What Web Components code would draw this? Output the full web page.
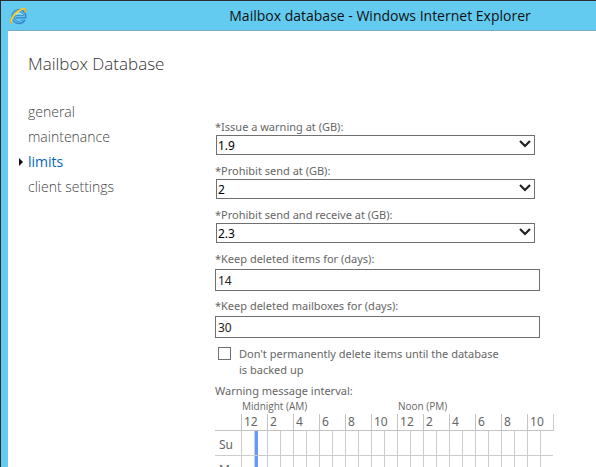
<!DOCTYPE html>
<html lang="en">
<head>
<meta charset="utf-8">
<title>Mailbox database</title>
<style>
    html, body {
        margin: 0;
        height: 100%;
        overflow: hidden;
    }

    body {
        font-family: "Noto Sans", "Open Sans", sans-serif;
        font-size: 11px;
        line-height: 16px;
        color: #666;
    }
</style>
</head>
<body>
<app-window caption="Mailbox database - Windows Internet Explorer">
    <mailbox-page heading="Mailbox Database">
        <side-nav slot="nav">
            <nav-item>general</nav-item>
            <nav-item>maintenance</nav-item>
            <nav-item current>limits</nav-item>
            <nav-item>client settings</nav-item>
        </side-nav>
        <limit-select label="*Issue a warning at (GB):" value="1.9"></limit-select>
        <limit-select label="*Prohibit send at (GB):" value="2"></limit-select>
        <limit-select label="*Prohibit send and receive at (GB):" value="2.3"></limit-select>
        <limit-input label="*Keep deleted items for (days):" value="14"></limit-input>
        <limit-input label="*Keep deleted mailboxes for (days):" value="30"></limit-input>
        <limit-check label="Don't permanently delete items until the database is backed up"></limit-check>
        <interval-grid label="Warning message interval:" days="Su,Mo"></interval-grid>
    </mailbox-page>
</app-window>

<script>
class BaseElement extends HTMLElement {
    constructor() {
        super();
        this.attachShadow({ mode: 'open' });
    }

    connectedCallback() {
        this.shadowRoot.innerHTML = this._getHTMLTemplate();
    }

    _attr(name) {
        return this.getAttribute(name) || '';
    }
}

class AppWindow extends BaseElement {
    _getHTMLTemplate() {
        return `
            <style>
                :host {
                    display: flex;
                    flex-direction: column;
                    box-sizing: border-box;
                    height: 100vh;
                    overflow: hidden;
                    padding-left: 7px;
                    border: solid #2d2d30;
                    border-width: 1px 0 0 1px;
                    background: #63cbf0;
                }

                header {
                    display: grid;
                    grid-template-columns: 164px 1fr 8px;
                    align-items: center;
                    height: 29px;
                    border-bottom: 1px solid #7aa9c4;
                }

                svg {
                    width: 18px;
                    height: 18px;
                    margin-left: 1px;
                }

                h1 {
                    margin: 0;
                    font-family: "Open Sans", sans-serif;
                    font-size: 14px;
                    line-height: 20px;
                    font-weight: 400;
                    text-align: center;
                    color: #111;
                }

                main {
                    flex: 1;
                    min-height: 0;
                    overflow: hidden;
                    background: #fff;
                }
            </style>
            <header>
                <svg viewBox="0 0 18 18" fill="none" aria-hidden="true">
                    <path d="M15.2 12.4A6 6 0 1 1 15.9 9.8H6.6" stroke="#2f86c8" stroke-width="3.2"/>
                    <path d="M14.8 12A5.8 5.8 0 1 1 15.4 9.6H6.8" stroke="#6cbcec" stroke-width="1.2"/>
                    <path d="M7 7.8C7.6 5.6 12 5.4 12.8 7.8" stroke="#d5f1fc" stroke-width="1"/>
                    <path d="M3.2 16.4C0.4 15.6 2.4 10.6 6.2 6.6C10.2 2.6 15.4 0.4 16.4 2.2C17 3.2 16.4 4.6 15.8 5.6" stroke="#eab020" stroke-width="1.8"/>
                    <path d="M2.2 14.6C2.6 11.6 5.6 7.4 9 4.8C12 2.4 15 1.4 15.8 2.2" stroke="#ffd83c" stroke-width="1.2"/>
                </svg>
                <h1>${this._attr('caption')}</h1>
            </header>
            <main><slot></slot></main>
        `;
    }
}

class MailboxPage extends BaseElement {
    _getHTMLTemplate() {
        return `
            <style>
                :host {
                    display: block;
                    padding: 20px 20px 0 11px;
                }

                h2 {
                    margin: 0 0 22px 9px;
                    font-family: "Open Sans", sans-serif;
                    font-size: 17px;
                    line-height: 26px;
                    font-weight: 300;
                    color: #333;
                }

                .columns {
                    display: grid;
                    grid-template-columns: 196px minmax(0, 1fr);
                }

                .form {
                    max-width: 340px;
                    padding-top: 20px;
                }
            </style>
            <h2>${this._attr('heading')}</h2>
            <div class="columns">
                <slot name="nav"></slot>
                <div class="form"><slot></slot></div>
            </div>
        `;
    }
}

class SideNav extends BaseElement {
    _getHTMLTemplate() {
        return `
            <style>
                :host {
                    display: block;
                    font-family: "Open Sans", sans-serif;
                }

                nav {
                    display: flex;
                    flex-direction: column;
                }
            </style>
            <nav><slot></slot></nav>
        `;
    }
}

class NavItem extends BaseElement {
    _getHTMLTemplate() {
        return `
            <style>
                :host {
                    display: block;
                }

                a {
                    display: flex;
                    align-items: center;
                    gap: 5px;
                    font-size: 14px;
                    line-height: 25px;
                    font-weight: 300;
                    color: #444;
                    text-decoration: none;
                }

                a::before {
                    content: "";
                    border: 4px solid transparent;
                    border-right-width: 0;
                }

                :host([current]) a {
                    font-weight: 400;
                    color: #0067b8;
                }

                :host([current]) a::before {
                    border-left-color: #111;
                }
            </style>
            <a href="#"><slot></slot></a>
        `;
    }
}

class LimitSelect extends BaseElement {
    _getHTMLTemplate() {
        return `
            <style>
                :host {
                    display: block;
                    max-width: 325px;
                    margin-bottom: 8px;
                }

                label {
                    display: block;
                }

                .box {
                    display: grid;
                    grid-template-columns: 1fr 24px;
                    align-items: center;
                    margin: 0 5px 0 1px;
                }

                select {
                    grid-area: 1 / 1 / 2 / 3;
                    appearance: none;
                    height: 20px;
                    padding: 1px 1px 0;
                    border: 1px solid #707070;
                    border-radius: 0;
                    background: #fff;
                    font: inherit;
                    font-size: 12px;
                    color: #000;
                }

                svg {
                    grid-area: 1 / 2;
                    width: 12px;
                    height: 8px;
                    margin: 0 0 2px 8px;
                    pointer-events: none;
                }
            </style>
            <label for="field">${this._attr('label')}</label>
            <div class="box">
                <select id="field">
                    <option>${this._attr('value')}</option>
                    <option>unlimited</option>
                </select>
                <svg viewBox="0 0 12 8" aria-hidden="true">
                    <path d="M1 1L6 6L11 1" fill="none" stroke="#222" stroke-width="2.2"/>
                </svg>
            </div>
        `;
    }
}

class LimitInput extends BaseElement {
    _getHTMLTemplate() {
        return `
            <style>
                :host {
                    display: block;
                    max-width: 325px;
                    margin-bottom: 7px;
                }

                label {
                    display: block;
                    margin-bottom: 2px;
                }

                input {
                    display: block;
                    box-sizing: border-box;
                    width: 100%;
                    height: 22px;
                    padding: 0 2px;
                    border: 1px solid #707070;
                    font: inherit;
                    font-size: 12px;
                    color: #222;
                }
            </style>
            <label for="field">${this._attr('label')}</label>
            <input id="field" type="text" value="${this._attr('value')}">
        `;
    }
}

class LimitCheck extends BaseElement {
    _getHTMLTemplate() {
        return `
            <style>
                :host {
                    display: flex;
                    align-items: flex-start;
                    gap: 8px;
                    max-width: 290px;
                    margin: 8px 0 5px;
                }

                input {
                    appearance: none;
                    flex: none;
                    width: 13px;
                    height: 13px;
                    margin: 1px 0 0 3px;
                    border: 1px solid #707070;
                    background: #fff;
                }

                input:checked {
                    background: #0072c6;
                }
            </style>
            <input id="field" type="checkbox">
            <label for="field">${this._attr('label')}</label>
        `;
    }
}

class IntervalGrid extends BaseElement {
    _getHours() {
        const hours = [12, 2, 4, 6, 8, 10];
        return hours.concat(hours).map(h => `<th colspan="2" scope="col">${h}</th>`).join('');
    }

    _getRows() {
        return this._attr('days').split(',').map(day => `
            <tr>
                <th scope="row">${day}</th>
                ${Array.from({ length: 24 }, (_, i) => `<td${i === 1 ? ' class="on"' : ''}></td>`).join('')}
            </tr>
        `).join('');
    }

    _getHTMLTemplate() {
        return `
            <style>
                :host {
                    display: block;
                }

                table {
                    table-layout: fixed;
                    width: 339px;
                    border-spacing: 0;
                }

                caption {
                    text-align: left;
                }

                col {
                    width: 13px;
                }

                col.day {
                    width: 26px;
                }

                col.edge {
                    width: 1px;
                }

                th, td {
                    box-sizing: border-box;
                    padding: 0;
                    font-weight: 400;
                    text-align: left;
                    white-space: nowrap;
                }

                .half th {
                    height: 15px;
                    padding-left: 1px;
                    font-family: "Open Sans", sans-serif;
                    font-size: 10px;
                    line-height: 14px;
                    vertical-align: top;
                }

                .hours > * {
                    height: 17px;
                    border-bottom: 1px solid #c4c4c4;
                    font-size: 12px;
                    line-height: 16px;
                }

                .hours th {
                    padding-left: 2px;
                    border-left: 1px solid #c4c4c4;
                }

                tbody th, tbody td {
                    height: 25px;
                    border-bottom: 1px solid #ccc;
                }

                tbody th {
                    padding: 3px 0 0 4px;
                    font-size: 12px;
                }

                tbody td, .hours .edge {
                    border-left: 1px solid #ccc;
                }

                td.on {
                    background: linear-gradient(#6699ff, #6699ff) 0 0 / 3px 100% no-repeat;
                    background-clip: padding-box;
                }
            </style>
            <table>
                <caption>${this._attr('label')}</caption>
                <colgroup>
                    <col class="day">
                    <col span="24">
                    <col class="edge">
                </colgroup>
                <thead>
                    <tr class="half">
                        <td></td>
                        <th colspan="12" scope="colgroup">Midnight (AM)</th>
                        <th colspan="12" scope="colgroup">Noon (PM)</th>
                        <td></td>
                    </tr>
                    <tr class="hours"><td></td>${this._getHours()}<td class="edge"></td></tr>
                </thead>
                <tbody>${this._getRows()}</tbody>
            </table>
        `;
    }
}

customElements.define('app-window', AppWindow);
customElements.define('mailbox-page', MailboxPage);
customElements.define('side-nav', SideNav);
customElements.define('nav-item', NavItem);
customElements.define('limit-select', LimitSelect);
customElements.define('limit-input', LimitInput);
customElements.define('limit-check', LimitCheck);
customElements.define('interval-grid', IntervalGrid);
</script>
</body>
</html>
